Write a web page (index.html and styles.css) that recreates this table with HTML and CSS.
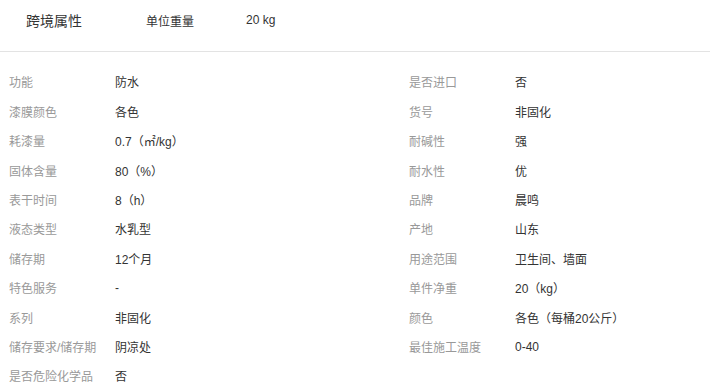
FILE: index.html
```html
<!DOCTYPE html>
<html lang="zh-CN">
<head>
<meta charset="utf-8">
<link rel="stylesheet" href="styles.css">
</head>
<body>
<div class="head">
  <div class="head-title">跨境属性</div>
  <div class="head-label">单位重量</div>
  <div class="head-value">20 kg</div>
</div>
<div class="attrs">
  <div class="row"><span class="k">功能</span><span class="v">防水</span></div>
  <div class="row"><span class="k">是否进口</span><span class="v">否</span></div>
  <div class="row"><span class="k">漆膜颜色</span><span class="v">各色</span></div>
  <div class="row"><span class="k">货号</span><span class="v">非固化</span></div>
  <div class="row"><span class="k">耗漆量</span><span class="v">0.7（㎡/kg）</span></div>
  <div class="row"><span class="k">耐碱性</span><span class="v">强</span></div>
  <div class="row"><span class="k">固体含量</span><span class="v">80（%）</span></div>
  <div class="row"><span class="k">耐水性</span><span class="v">优</span></div>
  <div class="row"><span class="k">表干时间</span><span class="v">8（h）</span></div>
  <div class="row"><span class="k">品牌</span><span class="v">晨鸣</span></div>
  <div class="row"><span class="k">液态类型</span><span class="v">水乳型</span></div>
  <div class="row"><span class="k">产地</span><span class="v">山东</span></div>
  <div class="row"><span class="k">储存期</span><span class="v">12个月</span></div>
  <div class="row"><span class="k">用途范围</span><span class="v">卫生间、墙面</span></div>
  <div class="row"><span class="k">特色服务</span><span class="v">-</span></div>
  <div class="row"><span class="k">单件净重</span><span class="v">20（kg）</span></div>
  <div class="row"><span class="k">系列</span><span class="v">非固化</span></div>
  <div class="row"><span class="k">颜色</span><span class="v">各色（每桶20公斤）</span></div>
  <div class="row"><span class="k">储存要求/储存期</span><span class="v">阴凉处</span></div>
  <div class="row"><span class="k">最佳施工温度</span><span class="v">0-40</span></div>
  <div class="row"><span class="k">是否危险化学品</span><span class="v">否</span></div>
</div>
</body>
</html>
```
FILE: styles.css
```css
html, body {
  margin: 0;
  padding: 0;
  background: #fff;
  font-family: "Liberation Sans", "Noto Sans CJK SC", sans-serif;
  color: #333;
}
.head {
  display: flex;
  align-items: center;
  height: 40px;
  padding: 0 0 11px 26px;
  border-bottom: 1px solid #e3e3e3;
  font-size: 12px;
}
.head-title {
  width: 120px;
  font-size: 14px;
  color: #333;
}
.head-label {
  width: 100px;
  color: #333;
}
.head-value {
  color: #333;
}
.attrs {
  display: grid;
  grid-template-columns: 400px 310px;
  grid-auto-rows: 29.4px;
  padding-top: 15.3px;
  font-size: 12px;
}
.row {
  display: flex;
  align-items: center;
  padding-left: 9px;
  white-space: nowrap;
}
.k {
  width: 106px;
  color: #999;
}
.v {
  color: #333;
}
```
